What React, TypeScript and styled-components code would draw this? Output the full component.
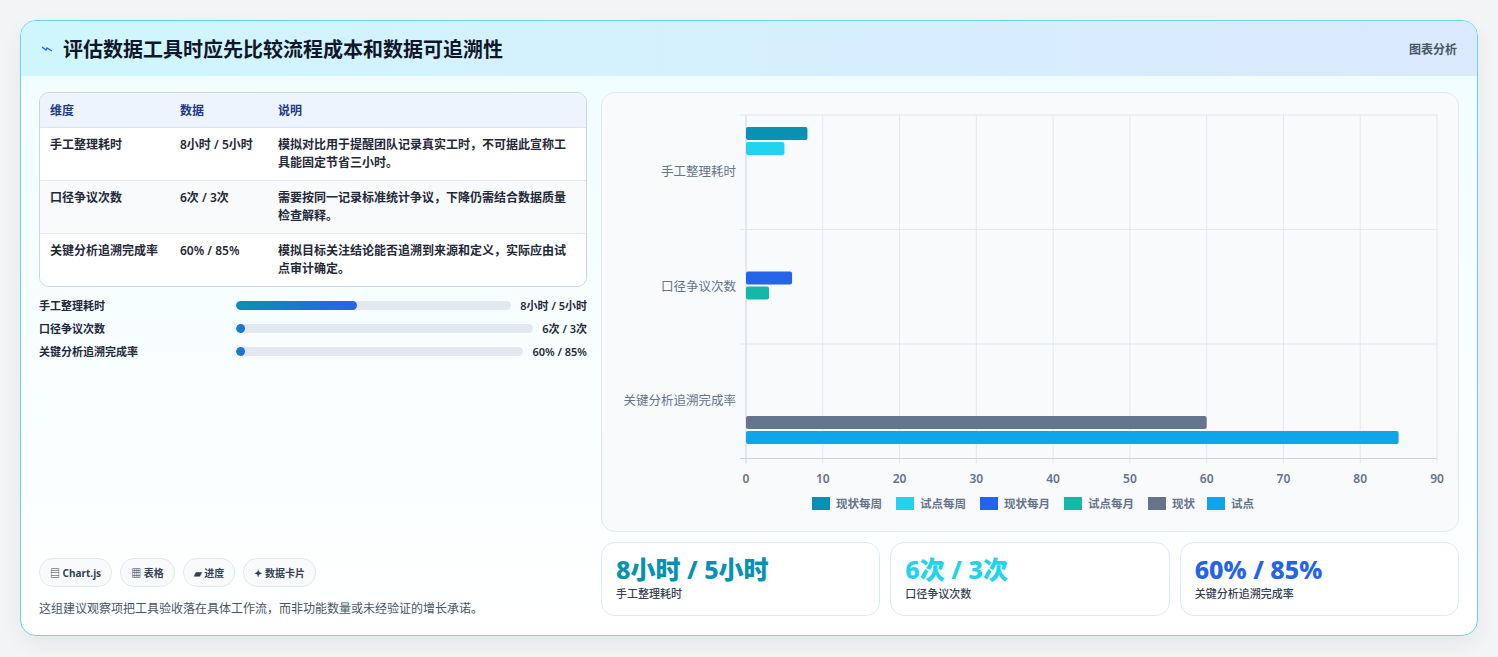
import styled, { createGlobalStyle } from "styled-components";

const Global = createGlobalStyle`
  body {
    margin: 0;
    background: #f3f4f6;
    font-family: "Noto Sans", "Noto Sans CJK SC", sans-serif;
    color: #1e293b;
  }
`;

const Page = styled.div`
  padding: 20px 20px 22px 20px;
`;

const Card = styled.div`
  border: 1px solid #67d7e8;
  border-radius: 16px;
  overflow: hidden;
  background: linear-gradient(180deg, #effdff 0%, #ffffff 100%);
  box-shadow: 0 8px 20px rgba(15, 23, 42, 0.06);
`;

const Header = styled.div`
  height: 55px;
  display: flex;
  align-items: center;
  justify-content: space-between;
  padding: 0 20px;
  background: linear-gradient(90deg, #cff6fd 0%, #dbe9fe 100%);
`;

const Title = styled.h1`
  margin: 0;
  font-size: 20px;
  font-weight: 700;
  color: #0f172a;
  display: flex;
  align-items: center;
  gap: 10px;
`;

const Tag = styled.span`
  font-size: 12px;
  color: #475569;
  font-weight: 600;
`;

const Body = styled.div`
  display: grid;
  grid-template-columns: 548px 1fr;
  gap: 14px;
  padding: 16px 18px 18px 18px;
`;

const Left = styled.div`
  display: flex;
  flex-direction: column;
  height: 525px;
`;

const Table = styled.table`
  width: 100%;
  border-collapse: separate;
  border-spacing: 0;
  border: 1px solid #cbd5e1;
  border-radius: 10px;
  overflow: hidden;
  font-size: 12px;
  font-weight: 600;
`;

const Th = styled.th`
  text-align: left;
  color: #1e3a8a;
  background: #eef4fd;
  padding: 8px 10px;
  border-bottom: 1px solid #dbe3ee;
`;

const Td = styled.td<{ $last?: boolean }>`
  padding: 8px 10px;
  vertical-align: top;
  line-height: 18px;
  color: #1f2937;
  border-bottom: ${(p) => (p.$last ? "none" : "1px solid #e2e8f0")};
`;

const Row = styled.tr<{ $alt?: boolean }>`
  background: ${(p) => (p.$alt ? "#f8fafc" : "#ffffff")};
`;

const Bars = styled.div`
  display: flex;
  flex-direction: column;
  gap: 7px;
  margin-top: 10px;
`;

const BarRow = styled.div`
  display: flex;
  align-items: center;
  gap: 9px;
  font-size: 11px;
  font-weight: 600;
`;

const BarLabel = styled.span`
  width: 188px;
`;

const Track = styled.div`
  flex: 1;
  height: 9px;
  border-radius: 5px;
  background: #e2e8f0;
  overflow: hidden;
`;

const Fill = styled.div`
  height: 100%;
  border-radius: 5px;
  background: linear-gradient(90deg, #0891b2, #2563eb);
  min-width: 9px;
`;

const Spacer = styled.div`
  flex: 1;
`;

const Chips = styled.div`
  display: flex;
  gap: 8px;
  margin-bottom: 12px;
`;

const Chip = styled.span`
  font-size: 10px;
  font-weight: 700;
  color: #334155;
  border: 1px solid #e2e8f0;
  background: #f8fafc;
  border-radius: 14px;
  padding: 6px 10px;
`;

const Note = styled.p`
  margin: 0;
  font-size: 12px;
  color: #475569;
`;

const Right = styled.div`
  display: flex;
  flex-direction: column;
  gap: 10px;
`;

const ChartCard = styled.div`
  height: 438px;
  border: 1px solid #e2e8f0;
  border-radius: 14px;
  background: #f8fafc;
`;

const Stats = styled.div`
  display: grid;
  grid-template-columns: repeat(3, 1fr);
  gap: 10px;
`;

const Stat = styled.div`
  height: 74px;
  border: 1px solid #dbeafe;
  border-radius: 14px;
  background: #fff;
  padding: 10px 14px;
  box-sizing: border-box;
`;

const StatValue = styled.div<{ $c: string }>`
  font-size: 25px;
  font-weight: 800;
  line-height: 32px;
  color: ${(p) => p.$c};
`;

const StatLabel = styled.div`
  font-size: 11px;
  color: #334155;
  font-weight: 500;
`;

const rows = [
  ["手工整理耗时", "8小时 / 5小时", "模拟对比用于提醒团队记录真实工时，不可据此宣称工具能固定节省三小时。"],
  ["口径争议次数", "6次 / 3次", "需要按同一记录标准统计争议，下降仍需结合数据质量检查解释。"],
  ["关键分析追溯完成率", "60% / 85%", "模拟目标关注结论能否追溯到来源和定义，实际应由试点审计确定。"],
];

const x0 = 144, pw = 691, top = 22, ch = 114.5;
const sx = (v: number) => x0 + (v / 90) * pw;
const series = [
  { cat: 0, off: 12, v: 8, c: "#0891b2" },
  { cat: 0, off: 27, v: 5, c: "#22d3ee" },
  { cat: 1, off: 42, v: 6, c: "#2563eb" },
  { cat: 1, off: 57, v: 3, c: "#14b8a6" },
  { cat: 2, off: 72, v: 60, c: "#64748b" },
  { cat: 2, off: 87, v: 85, c: "#0ea5e9" },
];
const legend = [
  ["现状每周", "#0891b2"],
  ["试点每周", "#22d3ee"],
  ["现状每月", "#2563eb"],
  ["试点每月", "#14b8a6"],
  ["现状", "#64748b"],
  ["试点", "#0ea5e9"],
];

function Chart() {
  const cats = ["手工整理耗时", "口径争议次数", "关键分析追溯完成率"];
  let lx = 210;
  return (
    <svg width="856" height="436" fontFamily="Noto Sans, Noto Sans CJK SC, sans-serif">
      {Array.from({ length: 10 }).map((_, i) => (
        <g key={i}>
          <line x1={sx(i * 10)} x2={sx(i * 10)} y1={top} y2={top + ch * 3 + 5} stroke={i === 0 ? "#cbd5e1" : "#e2e8f0"} />
          <text x={sx(i * 10)} y={top + ch * 3 + 24} fontSize="12" fill="#64748b" textAnchor="middle" fontWeight="600">{i * 10}</text>
        </g>
      ))}
      {[0, 1, 2, 3].map((i) => (
        <line key={i} x1={x0 - 6} x2={x0 + pw} y1={top + i * ch} y2={top + i * ch} stroke={i === 3 ? "#cbd5e1" : "#e2e8f0"} />
      ))}
      {cats.map((c, i) => (
        <text key={c} x={x0 - 10} y={top + i * ch + 61} fontSize="12.5" fill="#64748b" textAnchor="end">{c}</text>
      ))}
      {series.map((s, i) => (
        <rect key={i} x={x0} y={top + s.cat * ch + s.off} width={sx(s.v) - x0} height={13} rx={2} fill={s.c} />
      ))}
      {legend.map(([t, c]) => {
        const x = lx;
        lx += 34 + t.length * 12.5;
        return (
          <g key={t}>
            <rect x={x} y={404} width={18} height={13} fill={c} />
            <text x={x + 24} y={415} fontSize="11.5" fontWeight="600" fill="#64748b">{t}</text>
          </g>
        );
      })}
    </svg>
  );
}

export default function App() {
  return (
    <Page>
      <Global />
      <Card>
        <Header>
          <Title>
            <svg width="12" height="8" viewBox="0 0 12 8">
              <path d="M1 2 L5 5 L6 3 L11 6" stroke="#2563eb" strokeWidth="1.4" fill="none" />
            </svg>
            评估数据工具时应先比较流程成本和数据可追溯性
          </Title>
          <Tag>图表分析</Tag>
        </Header>
        <Body>
          <Left>
            <Table>
              <thead>
                <tr>
                  <Th style={{ width: 110 }}>维度</Th>
                  <Th style={{ width: 78 }}>数据</Th>
                  <Th>说明</Th>
                </tr>
              </thead>
              <tbody>
                {rows.map((r, i) => (
                  <Row key={r[0]} $alt={i === 1}>
                    {r.map((c) => (
                      <Td key={c} $last={i === rows.length - 1}>{c}</Td>
                    ))}
                  </Row>
                ))}
              </tbody>
            </Table>
            <Bars>
              {[["手工整理耗时", "8小时 / 5小时", 44], ["口径争议次数", "6次 / 3次", 3], ["关键分析追溯完成率", "60% / 85%", 3]].map(([l, v, w]) => (
                <BarRow key={l as string}>
                  <BarLabel>{l}</BarLabel>
                  <Track><Fill style={{ width: `${w}%` }} /></Track>
                  <span>{v}</span>
                </BarRow>
              ))}
            </Bars>
            <Spacer />
            <Chips>
              <Chip>▤ Chart.js</Chip>
              <Chip>▦ 表格</Chip>
              <Chip>▰ 进度</Chip>
              <Chip>✦ 数据卡片</Chip>
            </Chips>
            <Note>这组建议观察项把工具验收落在具体工作流，而非功能数量或未经验证的增长承诺。</Note>
          </Left>
          <Right>
            <ChartCard>
              <Chart />
            </ChartCard>
            <Stats>
              <Stat><StatValue $c="#0891b2">8小时 / 5小时</StatValue><StatLabel>手工整理耗时</StatLabel></Stat>
              <Stat><StatValue $c="#22d3ee">6次 / 3次</StatValue><StatLabel>口径争议次数</StatLabel></Stat>
              <Stat><StatValue $c="#2563eb">60% / 85%</StatValue><StatLabel>关键分析追溯完成率</StatLabel></Stat>
            </Stats>
          </Right>
        </Body>
      </Card>
    </Page>
  );
}
